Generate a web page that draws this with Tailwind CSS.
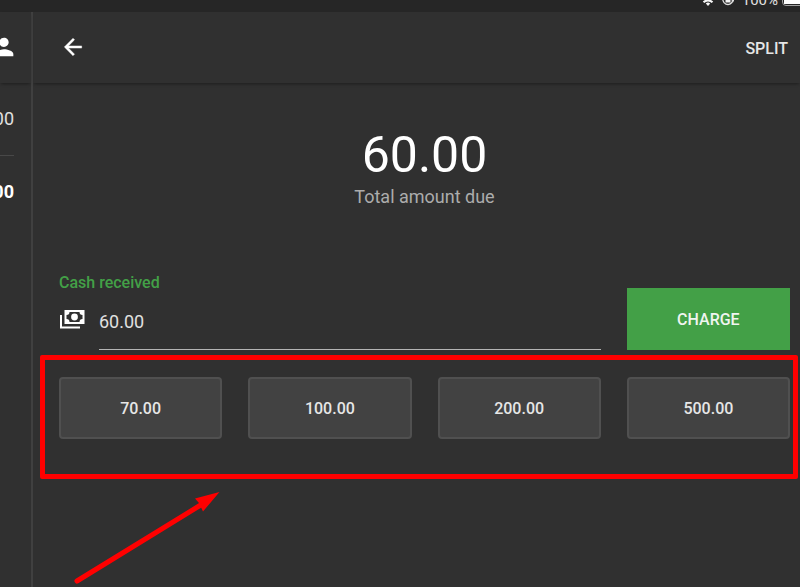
<!DOCTYPE html>
<html lang="en">
<head>
    <meta charset="UTF-8">
    <meta name="viewport" content="width=device-width, initial-scale=1.0">
    <script src="https://cdn.jsdelivr.net/npm/@tailwindcss/browser@4"></script>
    <title>Payment</title>
</head>
<body class="bg-[#303030] font-[Roboto,sans-serif] text-white">
    <div class="relative flex flex-col h-screen overflow-hidden">
        <!-- Status bar -->
        <div class="h-3 shrink-0 bg-[#262626] flex items-end justify-end overflow-hidden text-[#e0e0e0]">
            <div class="flex items-center gap-2 h-5 mb-0.5">
                <svg class="w-3 h-3" viewBox="0 0 12 12" fill="none" stroke="#f5f5f5" stroke-width="2">
                    <path d="M-1 5a10 10 0 0 1 14 0M1.500 8.200a6.500 6.500 0 0 1 9 0"/>
                    <path d="M6 12L3.800 9.600a3 3 0 0 1 4.400 0z" fill="#f5f5f5" stroke="none"/>
                </svg>
                <svg class="w-3 h-3" viewBox="0 0 12 12" fill="none" stroke="#e0e0e0">
                    <path d="M10.800 6.500A5 5 0 1 1 9.500 2" stroke-width="1.300"/>
                    <rect x="3.500" y="4" width="5" height="4.500" fill="#f5f5f5" stroke="none"/>
                    <path d="M9 5.500h3.500L11 8.500z" fill="#e0e0e0" stroke="none"/>
                </svg>
                <span class="text-[15px] leading-5">100%</span>
            </div>
            <div class="w-6 h-4 ml-1 mb-1.5 -mr-1.5 p-px border border-[#a0a0a0] rounded-sm">
                <div class="h-full bg-white"></div>
            </div>
        </div>

        <div class="flex flex-1 min-h-0">
            <!-- Ticket column -->
            <aside class="w-[33px] shrink-0 flex flex-col border-r-2 border-[#404040]">
                <header class="h-[71px] shrink-0 flex items-center justify-end pr-[13px] pb-0.5 shadow-[0_2px_3px_-1px_rgba(0,0,0,0.4)]">
                    <svg class="w-7 h-7 shrink-0" viewBox="0 0 24 24" fill="#fff">
                        <path d="M12 12c2.210 0 4-1.790 4-4s-1.790-4-4-4-4 1.790-4 4 1.790 4 4 4zm0 2c-2.670 0-8 1.340-8 4v2h16v-2c0-2.660-5.330-4-8-4z"/>
                    </svg>
                </header>
                <div class="mr-[17px] h-[73px] flex items-center justify-end border-b border-[#484848] text-lg text-[#e0e0e0]">60.00</div>
                <div class="mr-[17px] h-[72px] flex items-center justify-end text-lg font-bold">60.00</div>
            </aside>

            <main class="flex-1 min-w-0 overflow-hidden">
                <header class="h-[71px] flex items-center justify-between pl-[27px] pr-3 shadow-[0_2px_3px_-1px_rgba(0,0,0,0.4)]">
                    <button type="button" aria-label="Back" class="pb-0.5">
                        <svg class="w-[26px] h-[26px]" viewBox="0 0 24 24" fill="#fff" stroke="#fff" stroke-width=".4">
                            <path d="M20 11H7.830l5.590-5.590L12 4l-8 8 8 8 1.410-1.410L7.830 13H20v-2z"/>
                        </svg>
                    </button>
                    <button type="button" class="pt-0.5 text-base font-medium text-[#e6e6e6]">SPLIT</button>
                </header>

                <div class="pl-[26px] pr-[10px]">
                    <div class="mt-[42px] text-center">
                        <p class="text-[50px] leading-[60px]">60.00</p>
                        <p class="text-lg leading-6 text-[#acacac]">Total amount due</p>
                    </div>

                    <form class="mt-16 grid grid-cols-4 gap-x-[26px] items-end">
                        <div class="col-span-3">
                            <label for="cash" class="block text-base leading-5 font-medium text-[#43a047]">Cash received</label>
                            <div class="flex items-start">
                                <svg class="w-[26px] h-5 mt-4 mr-[14px] shrink-0" viewBox="0 0 26 20">
                                    <path d="M2 6v12.500h19" fill="none" stroke="#fff" stroke-width="2"/>
                                    <rect x="5.500" y="1" width="20" height="14" fill="#fff"/>
                                    <path d="M10.500 3h10a3 3 0 0 0 3 3v4a3 3 0 0 0-3 3h-10a3 3 0 0 0-3-3V6a3 3 0 0 0 3-3z" fill="#303030"/>
                                    <circle cx="15.500" cy="8" r="3.400" fill="#fff"/>
                                </svg>
                                <input id="cash" type="text" value="60.00" class="flex-1 min-w-0 h-[57px] pt-px border-b border-[#b4b4b4] text-lg text-[#e0e0e0] outline-none">
                            </div>
                        </div>
                        <button type="button" class="h-[62px] pt-0.5 bg-[#43a047] text-base font-medium text-[#f0f5f0]">CHARGE</button>
                    </form>

                    <!-- Quick cash amounts -->
                    <div class="relative mt-[27px] grid grid-cols-4 gap-x-[26px] text-base font-medium text-[#e6e6e6]">
                        <button type="button" class="h-[62px] pt-0.5 bg-[#424242] border-2 border-[#505050] rounded-sm">70.00</button>
                        <button type="button" class="h-[62px] pt-0.5 bg-[#424242] border-2 border-[#505050] rounded-sm">100.00</button>
                        <button type="button" class="h-[62px] pt-0.5 bg-[#424242] border-2 border-[#505050] rounded-sm">200.00</button>
                        <button type="button" class="h-[62px] pt-0.5 bg-[#424242] border-2 border-[#505050] rounded-sm">500.00</button>

                        <!-- Highlight frame and arrow -->
                        <div class="absolute -top-[22px] -bottom-10 -left-[19px] -right-2 border-5 border-[#ff0000] rounded-xs pointer-events-none"></div>
                        <svg class="absolute top-[113px] left-[13px] w-[150px] h-[96px] pointer-events-none" viewBox="0 0 150 96" fill="#f00">
                            <path d="M5 91L132 13" stroke="#f00" stroke-width="5" stroke-linecap="round"/>
                            <path d="M147.500 2L123 8.500L127 13L131 21.500z"/>
                        </svg>
                    </div>
                </div>
            </main>
        </div>
    </div>
</body>
</html>
